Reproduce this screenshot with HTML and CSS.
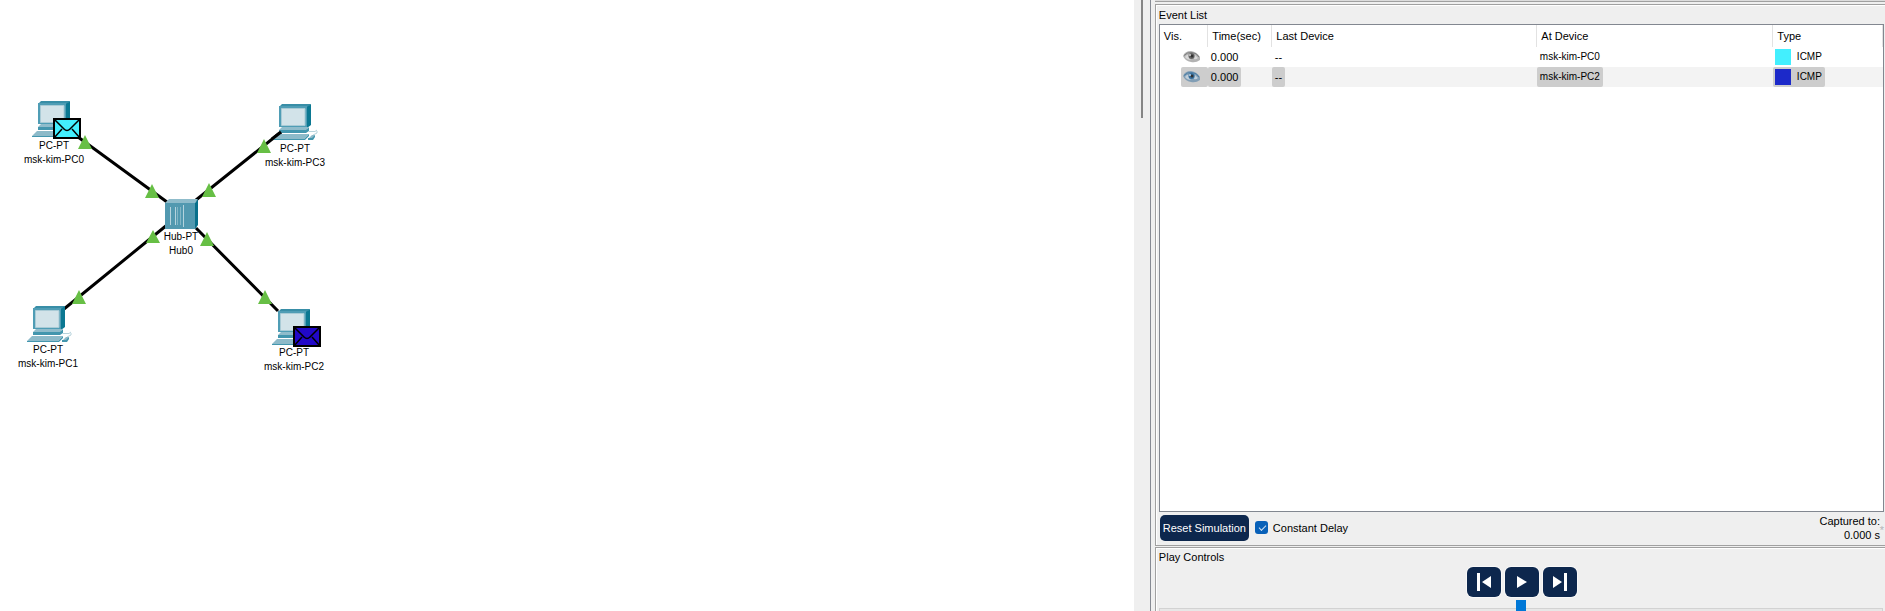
FILE: index.html
```html
<!DOCTYPE html>
<html lang="en">
<head>
<meta charset="utf-8">
<title>Network Simulation</title>
<link rel="stylesheet" href="styles.css">
</head>
<body>
<svg class="defs" aria-hidden="true">
  <defs>
    <symbol id="pc" viewBox="0 0 46 37">
      <path fill="#388ea7" d="M6 3 9 0H38L35 3Z"/>
      <path fill="#0b7892" d="M34 3 38 0V21L34 24Z"/>
      <path fill="#4f9db5" d="M6 2H34V23H6Z"/>
      <path fill="#d2e3e9" stroke="#a9cbd6" d="M8.500 4.500H32V21.500H8.500Z"/>
      <path fill="#8fbccb" d="M9 23H35L34 26H6Z"/>
      <path fill="#4396ae" d="M6 26H33L36 23V27L33 29H6Z"/>
      <path fill="#8dbac9" d="M5 30H36L31 35H0Z"/>
      <path fill="#4396ae" d="M0 35H31L36 30V32L32 36H0Z"/>
      <path fill="none" stroke="#b7d3dc" d="M36 27.500H42L44 26M44 27V29L40 31"/>
      <path fill="#8dbac9" d="M36 34 39 31H42L40 35H36Z"/>
      <path fill="#4396ae" d="M35 34H39L42 31V33L40 36H35Z"/>
    </symbol>
    <symbol id="eye" viewBox="0 0 17 12">
      <path fill="currentColor" opacity=".5" d="M0 5Q2 0 8 0Q14 1 17 6V9Q13 12 8 11Q2 10 0 5Z"/>
      <path fill="none" stroke="currentColor" opacity=".7" d="M1 4.500Q4 1 9 1.500Q14 2 16 6"/>
      <path fill="#fff" opacity=".5" d="M2 6Q4 3 6 4Q5 7 8 9Q4 9 2 6ZM12 4L15 7Q13 9 11 8Z"/>
      <circle cx="8.500" cy="5" r="3" fill="currentColor"/>
      <circle cx="9" cy="5" r="1.500" fill="#333"/>
      <circle cx="7" cy="4" r="1" fill="#fff" opacity=".7"/>
    </symbol>
  </defs>
</svg>

<main class="workspace">
  <svg class="links" width="340" height="400" aria-hidden="true">
    <g stroke="#000" stroke-width="3">
      <path d="M78 137 167 202M281 132 196 200M64 309 167 225M196 228 278 311"/>
    </g>
  </svg>
  <div class="node pc0"><svg class="pc"><use href="#pc"/></svg></div>
  <div class="node pc1"><svg class="pc"><use href="#pc"/></svg></div>
  <div class="node pc2"><svg class="pc"><use href="#pc"/></svg></div>
  <div class="node pc3"><svg class="pc"><use href="#pc"/></svg></div>
  <svg class="links" width="340" height="400" aria-hidden="true">
    <path stroke="#000" stroke-width="3" d="M281 132 272 139"/>
    <g transform="translate(165 199)">
      <path fill="#8fbccb" d="M0 4 4 0H33L30 4Z"/>
      <path fill="#08708b" d="M30 4 33 0V26L30 30Z"/>
      <path fill="#5299b0" d="M0 4H30V30H0Z"/>
      <path stroke="#b4d3dd" d="M5.500 8V26M10.500 8V26M18.500 6V28"/>
      <path stroke="#83b6c6" d="M12.500 8V26M15.500 8V26"/>
    </g>
    <g fill="#67bf45">
      <path d="M85 135 92 149H78ZM152 184 159 198H145ZM209 183 216 197H202ZM153 230 160 243H146ZM207 232 214 246H200ZM264 139 271 153H257ZM79 290 86 304H72ZM265 290 272 304H258Z"/>
    </g>
    <g stroke="#000" stroke-width="2">
      <path fill="#43effe" d="M54 119H80V138H54Z"/>
      <path fill="none" stroke-width="1.500" d="M54 119 64 129Q67 132 70 129L80 119M54 138 62 129M80 138 72 129"/>
      <path fill="#2108c8" d="M294 327H320V346H294Z"/>
      <path fill="none" stroke-width="1.500" d="M294 327 304 337Q307 340 310 337L320 327M294 346 302 337M320 346 312 337"/>
    </g>
  </svg>
  <p class="label l0">PC-PT<br>msk-kim-PC0</p>
  <p class="label l1">PC-PT<br>msk-kim-PC1</p>
  <p class="label l2">PC-PT<br>msk-kim-PC2</p>
  <p class="label l3">PC-PT<br>msk-kim-PC3</p>
  <p class="label lh">Hub-PT<br>Hub0</p>
</main>

<div class="gutter"><div class="scroll-thumb"></div></div>

<aside class="side">
  <div class="strip"></div>
  <section class="panel events">
    <h2>Event List</h2>
    <div class="list">
      <table>
        <colgroup><col class="c-vis"><col class="c-time"><col class="c-last"><col class="c-at"><col></colgroup>
        <thead>
          <tr><th>Vis.</th><th>Time(sec)</th><th>Last Device</th><th>At Device</th><th>Type</th></tr>
        </thead>
        <tbody>
          <tr>
            <td class="vis"><span class="chip eye-chip"><svg class="eye"><use href="#eye"/></svg></span></td>
            <td><span class="chip">0.000</span></td>
            <td><span class="chip">--</span></td>
            <td><span class="chip name">msk-kim-PC0</span></td>
            <td><span class="chip name type"><i class="swatch cyan"></i>ICMP</span></td>
          </tr>
          <tr class="selected">
            <td class="vis"><span class="chip eye-chip"><svg class="eye"><use href="#eye"/></svg></span></td>
            <td><span class="chip">0.000</span></td>
            <td><span class="chip">--</span></td>
            <td><span class="chip name">msk-kim-PC2</span></td>
            <td><span class="chip name type"><i class="swatch blue"></i>ICMP</span></td>
          </tr>
        </tbody>
      </table>
    </div>
    <div class="footer">
      <button class="reset" type="button">Reset Simulation</button>
      <label class="delay"><input type="checkbox" checked>Constant Delay</label>
      <div class="captured">Captured to:<br>0.000 s</div>
      <span class="star">*</span>
    </div>
  </section>
  <section class="panel play">
    <h2>Play Controls</h2>
    <div class="buttons">
      <button type="button" aria-label="Step back"><svg width="34" height="30"><path fill="#fff" d="M10 6H13V24H10ZM24 9V21L15 15Z"/></svg></button>
      <button type="button" aria-label="Play"><svg width="34" height="30"><path fill="#fff" d="M12 9V21L22 15Z"/></svg></button>
      <button type="button" aria-label="Step forward"><svg width="34" height="30"><path fill="#fff" d="M21 6H24V24H21ZM10 9V21L19 15Z"/></svg></button>
    </div>
    <input class="speed" type="range" min="0" max="100" value="50" aria-label="Play speed">
  </section>
</aside>
</body>
</html>
```

FILE: styles.css
```css
* { box-sizing: border-box; }

body {
  display: flex;
  height: 100vh;
  margin: 0;
  overflow: hidden;
  background: #fff;
  color: #000;
  font: 11px/14px "Liberation Sans", Arial, sans-serif;
}

h2, p { margin: 0; font-size: 11px; font-weight: normal; }
button { border: 0; padding: 0; font: inherit; }

.defs { position: absolute; width: 0; height: 0; }

/* Topology canvas */
.workspace { position: relative; flex: 1; overflow: hidden; }
.links { position: absolute; left: 0; top: 0; }
.node { position: absolute; }
.pc { display: block; width: 46px; height: 37px; }
.pc0 { left: 32px; top: 101px; }
.pc1 { left: 27px; top: 306px; }
.pc2 { left: 272px; top: 309px; }
.pc3 { left: 273px; top: 104px; }
.label { position: absolute; width: 80px; text-align: center; font-size: 10px; }
.l0 { left: 14px; top: 139px; }
.l1 { left: 8px; top: 343px; }
.l2 { left: 254px; top: 346px; }
.l3 { left: 255px; top: 142px; }
.lh { left: 141px; top: 230px; }

.gutter { width: 16px; padding-left: 7px; background: #efefef; }
.scroll-thumb { width: 2px; height: 118px; background: #858585; }

/* Simulation panel */
.side {
  display: flex;
  flex-direction: column;
  flex: 0 0 39%;
  border-left: 1px solid #868a93;
  padding-left: 4px;
  background: #efefef;
}
.strip { height: 2px; margin-bottom: 2px; background: #dcdcdc; border-bottom: 1px solid #a0a0a0; }
.panel {
  border: 1px solid #a0a0a0;
  border-right: 0;
  box-shadow: inset 1px 1px #fff;
  padding-left: 3px;
}
.events { display: flex; flex: 1; flex-direction: column; min-height: 0; margin-bottom: 1px; padding-top: 3px; }
.events h2 { height: 16px; }
.list { flex: 1; min-height: 0; margin-right: 1px; border: 1px solid #828790; background: #fff; }

table { width: 100%; table-layout: fixed; border-collapse: collapse; }
.c-vis { width: 48px; }
.c-time { width: 64px; }
.c-last { width: 265px; }
.c-at { width: 236px; }
th { height: 22px; padding: 0 4px; border-right: 1px solid #e2e2e2; text-align: left; font-weight: normal; }
td { height: 20px; padding: 0; }
.vis { padding-left: 21px; }
.chip { display: flex; align-items: center; width: max-content; height: 20px; padding: 0 3px; border-radius: 2px; }
.name { font-size: 10px; }
.eye-chip { width: 100%; padding: 0 2px; }
.eye { width: 17px; height: 12px; color: #666; }
.type { gap: 6px; padding: 0 3px 0 2px; }
.swatch { width: 16px; height: 16px; }
.cyan { background: #43effe; }
.blue { background: #1c29c9; }
.selected td { background: #f3f3f3; }
.selected .vis { background: #fff; }
.selected .chip { background: #cdcdcd; }
.selected .eye { color: #356f9e; }

.footer { position: relative; display: flex; align-items: center; height: 33px; padding: 0 5px 2px 1px; }
.reset { width: 89px; height: 26px; border-radius: 5px; background: #0d274d; color: #fff; }
.delay { display: flex; align-items: center; gap: 5px; margin-left: 6px; }
.delay input {
  appearance: none;
  position: relative;
  width: 13px;
  height: 13px;
  margin: 0;
  border-radius: 3px;
  background: #0860b8;
}
.delay input::after {
  content: "";
  position: absolute;
  left: 4px;
  top: 4px;
  width: 6px;
  height: 3px;
  border: solid #cfe0f2;
  border-width: 0 0 1px 1px;
  transform: rotate(-45deg);
}
.captured { margin-left: auto; text-align: right; }
.star { position: absolute; right: 1px; top: 11px; color: #b4b4b8; }

.play { height: 64px; padding-top: 2px; border-bottom: 0; overflow: hidden; }
.play h2 { height: 17px; }
.buttons { display: flex; justify-content: center; gap: 4px; }
.buttons button { width: 34px; height: 30px; border-radius: 6px; background: #0d274d; box-shadow: 0 0 0 1px #fff8; }
.buttons svg { display: block; }
.speed { display: block; appearance: none; width: calc(100% - 2px); height: 20px; margin: 3px 0 0; background: none; }
.speed::-webkit-slider-runnable-track { height: 4px; border: 1px solid #d2d2d2; background: #e7e7e7; }
.speed::-webkit-slider-thumb { appearance: none; width: 10px; height: 20px; margin-top: -9px; background: #0078d7; }
```
